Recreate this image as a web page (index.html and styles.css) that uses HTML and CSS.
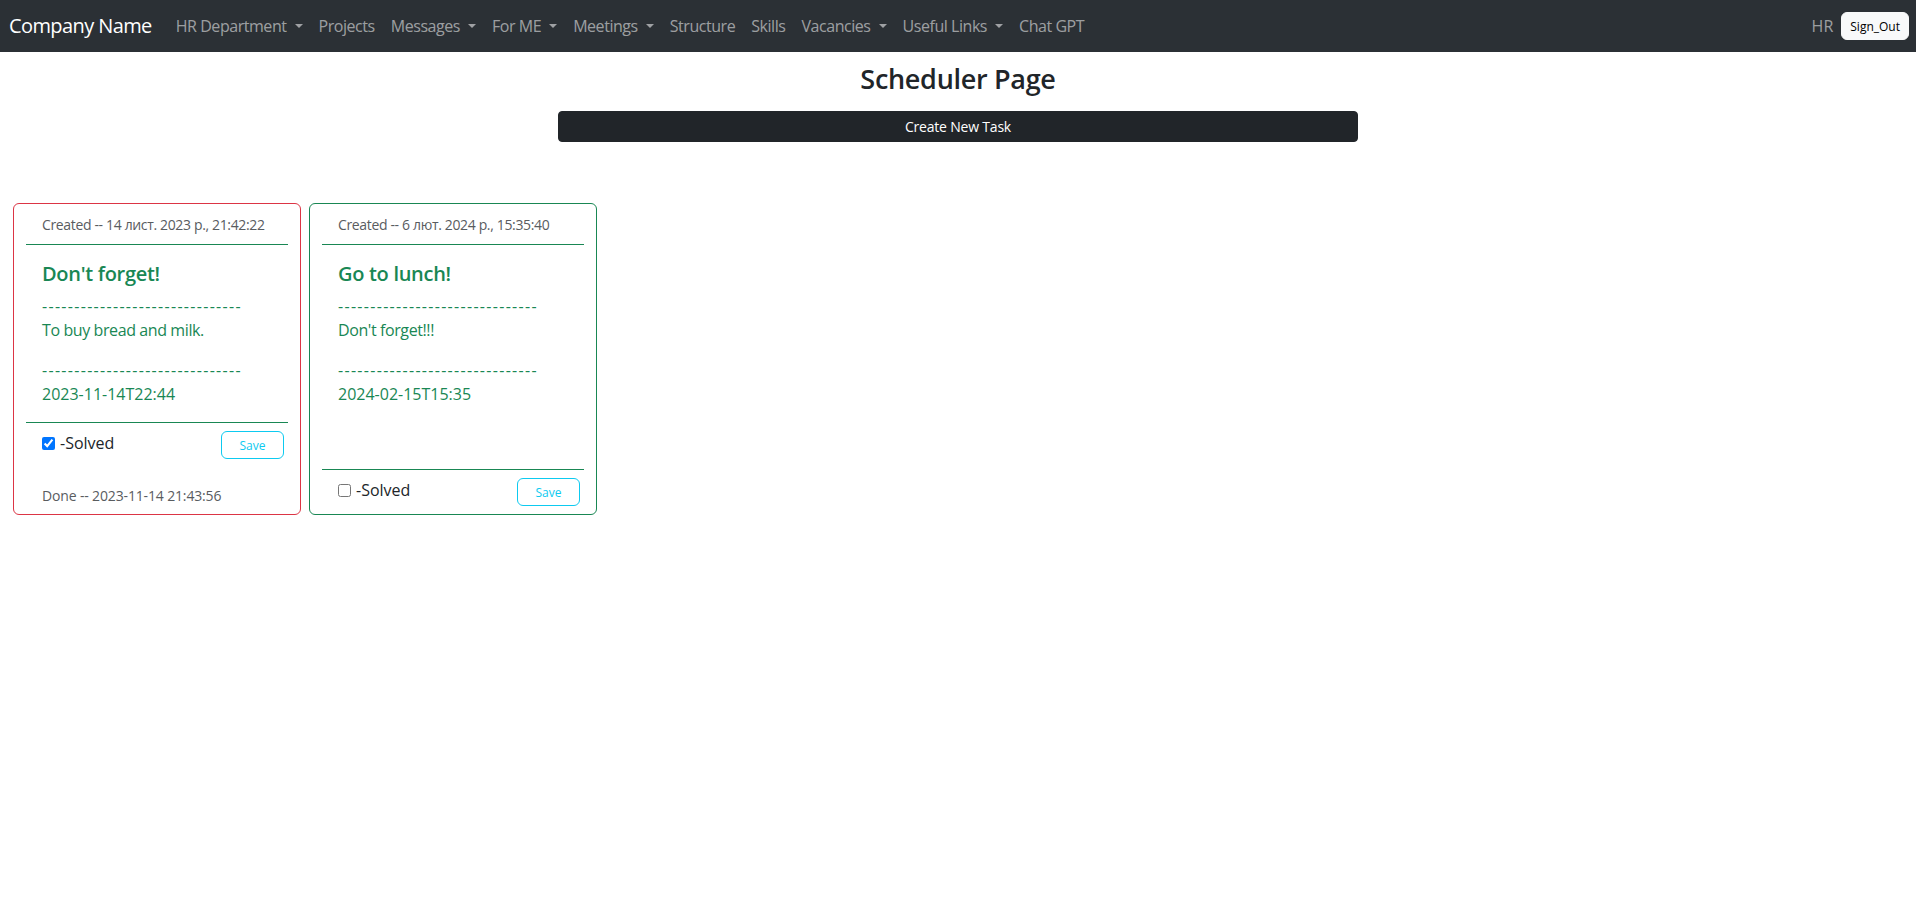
FILE: index.html
```html
<!DOCTYPE html>
<html lang="en">
<head>
<meta charset="utf-8">
<title>Scheduler Page</title>
<link rel="stylesheet" href="styles.css">
</head>
<body>
<nav class="navbar">
  <a class="brand" href="#">Company Name</a>
  <ul class="nav-links">
    <li><a class="nav-link dropdown" href="#">HR Department</a></li>
    <li><a class="nav-link" href="#">Projects</a></li>
    <li><a class="nav-link dropdown" href="#">Messages</a></li>
    <li><a class="nav-link dropdown" href="#">For ME</a></li>
    <li><a class="nav-link dropdown" href="#">Meetings</a></li>
    <li><a class="nav-link" href="#">Structure</a></li>
    <li><a class="nav-link" href="#">Skills</a></li>
    <li><a class="nav-link dropdown" href="#">Vacancies</a></li>
    <li><a class="nav-link dropdown" href="#">Useful Links</a></li>
    <li><a class="nav-link" href="#">Chat GPT</a></li>
  </ul>
  <div class="nav-right">
    <span class="user">HR</span>
    <button class="signout">Sign_Out</button>
  </div>
</nav>
<main class="main">
  <h3 class="page-title">Scheduler Page</h3>
  <button class="create-btn">Create New Task</button>
  <div class="cards">
    <div class="card card-danger">
      <div class="card-header">Created -- 14 лист. 2023 р., 21:42:22</div>
      <div class="card-body">
        <h5 class="card-title">Don't forget!</h5>
        <p class="card-text"><span class="dashes">-------------------------------</span><br>To buy bread and milk.</p>
        <p class="card-text"><span class="dashes">-------------------------------</span><br><span class="num">2023-11-14T22:44</span></p>
      </div>
      <div class="card-footer">
        <div class="footer-row">
          <label class="solved"><input type="checkbox" checked>-Solved</label>
          <button class="save-btn">Save</button>
        </div>
        <div class="done">Done -- 2023-11-14 21:43:56</div>
      </div>
    </div>
    <div class="card card-success">
      <div class="card-header">Created -- 6 лют. 2024 р., 15:35:40</div>
      <div class="card-body">
        <h5 class="card-title">Go to lunch!</h5>
        <p class="card-text"><span class="dashes">-------------------------------</span><br>Don't forget!!!</p>
        <p class="card-text"><span class="dashes">-------------------------------</span><br><span class="num">2024-02-15T15:35</span></p>
      </div>
      <div class="card-footer">
        <div class="footer-row">
          <label class="solved"><input type="checkbox">-Solved</label>
          <button class="save-btn">Save</button>
        </div>
      </div>
    </div>
  </div>
</main>
</body>
</html>
```

FILE: styles.css
```css
* { box-sizing: border-box; }

body {
  margin: 0;
  font-family: "Open Sans", "Noto Sans", "Liberation Sans", sans-serif;
  color: #212529;
  background: #fff;
}

.navbar {
  display: flex;
  align-items: center;
  height: 52px;
  background: #2b3035;
  padding: 0 7px 0 9px;
}

.brand {
  color: #fff;
  font-size: 20px;
  line-height: 30px;
  letter-spacing: -0.6px;
  text-decoration: none;
  margin-right: 16px;
}

.nav-links {
  display: flex;
  list-style: none;
  margin: 0;
  padding: 0;
  flex: 1;
}

.nav-link {
  display: block;
  color: rgba(255, 255, 255, 0.55);
  text-decoration: none;
  font-size: 16px;
  line-height: 24px;
  letter-spacing: -0.45px;
  padding: 8px;
}

.dropdown::after {
  content: "";
  display: inline-block;
  margin-left: 8px;
  vertical-align: 4px;
  border-top: 4px solid;
  border-right: 4px solid transparent;
  border-left: 4px solid transparent;
}

.nav-right {
  display: flex;
  align-items: center;
  gap: 8px;
}

.user {
  color: rgba(255, 255, 255, 0.55);
  font-size: 16px;
}

.signout {
  height: 28px;
  padding: 0 8px;
  background: #f8f9fa;
  border: 1px solid #f8f9fa;
  border-radius: 6px;
  font-family: inherit;
  font-size: 12px;
  color: #000;
}

.main {
  display: flex;
  flex-direction: column;
}

.page-title {
  text-align: center;
  font-size: 27px;
  font-weight: 600;
  line-height: 34px;
  letter-spacing: -0.3px;
  margin: 10px 0 15px;
}

.create-btn {
  display: block;
  width: 800px;
  height: 31px;
  margin: 0 auto;
  background: #212529;
  color: #fff;
  border: 1px solid #212529;
  border-radius: 4px;
  font-family: inherit;
  font-size: 14px;
  letter-spacing: -0.2px;
}

.cards {
  display: flex;
  gap: 8px;
  padding-left: 13px;
  margin-top: 61px;
  align-items: stretch;
}

.card {
  width: 288px;
  border: 1px solid;
  border-radius: 6px;
  padding: 0 12px;
  display: flex;
  flex-direction: column;
}

.card-danger { border-color: #dc3545; }
.card-success { border-color: #198754; }

.card-header {
  padding: 10px 16px 9px;
  border-bottom: 1px solid #198754;
  font-size: 14px;
  line-height: 21px;
  letter-spacing: -0.35px;
  color: #595c5f;
  white-space: nowrap;
}

.card-body {
  flex: 1;
  padding: 17px 16px 16px;
  color: #198754;
}

.card-title {
  font-size: 20px;
  line-height: 24px;
  font-weight: 600;
  letter-spacing: -0.3px;
  margin: 0 0 8px;
}

.card-text {
  margin: 0 0 16px;
  font-size: 16px;
  line-height: 24px;
  letter-spacing: -0.4px;
}

.card-text:last-child { margin-bottom: 0; }

.dashes { letter-spacing: 1.3px; }

.num { letter-spacing: 0; }

.card-footer {
  border-top: 1px solid #198754;
  padding: 8px 4px 8px 16px;
}

.footer-row {
  display: flex;
  justify-content: space-between;
  align-items: flex-start;
}

.solved {
  display: flex;
  align-items: center;
  font-size: 16px;
  line-height: 24px;
  color: #212529;
}

.solved input {
  width: 13px;
  height: 13px;
  margin: 0 5px 0 0;
}

.save-btn {
  width: 63px;
  height: 28px;
  background: transparent;
  border: 1px solid #0dcaf0;
  border-radius: 6px;
  color: #0dcaf0;
  font-family: inherit;
  font-size: 12px;
}

.done {
  margin-top: 26px;
  font-size: 14px;
  line-height: 21px;
  letter-spacing: -0.15px;
  color: #595c5f;
}
```
